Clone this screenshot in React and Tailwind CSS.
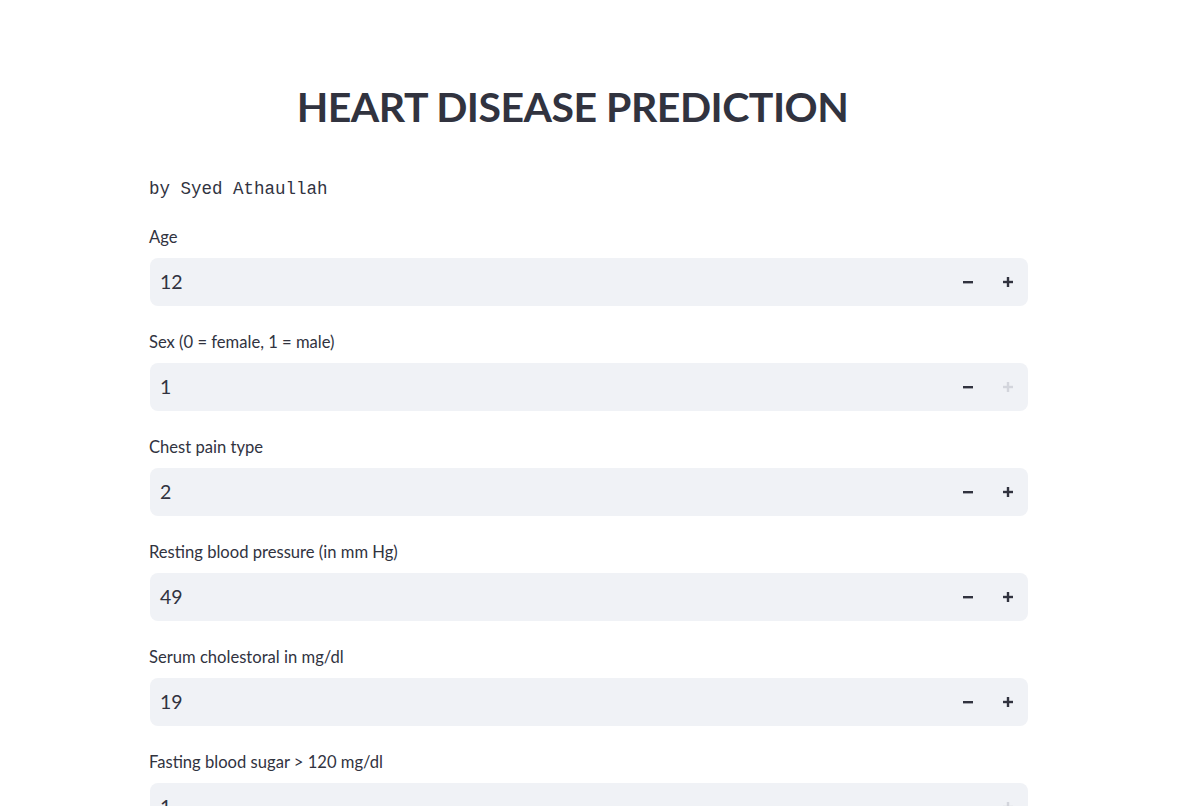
const fields = [
  { label: 'Age', value: '12' },
  { label: 'Sex (0 = female, 1 = male)', value: '1', plusDisabled: true },
  { label: 'Chest pain type', value: '2' },
  { label: 'Resting blood pressure (in mm Hg)', value: '49' },
  { label: 'Serum cholestoral in mg/dl', value: '19' },
  { label: 'Fasting blood sugar > 120 mg/dl', value: '1', minusDisabled: true, plusDisabled: true },
];

function MinusIcon({ disabled }) {
  return (
    <svg width="12" height="12" viewBox="0 0 12 12">
      <rect x="1" y="5" width="10" height="2.4" fill={disabled ? '#d3d5dc' : '#31333f'} />
    </svg>
  );
}

function PlusIcon({ disabled }) {
  const c = disabled ? '#d3d5dc' : '#31333f';
  return (
    <svg width="12" height="12" viewBox="0 0 12 12">
      <rect x="1" y="4.8" width="10" height="2.4" fill={c} />
      <rect x="4.8" y="1" width="2.4" height="10" fill={c} />
    </svg>
  );
}

function NumberField({ label, value, minusDisabled, plusDisabled }) {
  return (
    <div className="flex flex-col">
      <label className="h-[22px] leading-[22px] text-[16.6px] text-[#31333f] mb-[10px]">{label}</label>
      <div className="h-[48px] flex items-center bg-[#f0f2f6] rounded-[8px] ml-px">
        <span className="flex-1 pl-[10px] text-[19.5px] text-[#31333f]">{value}</span>
        <button className="w-[40px] h-full flex items-center justify-center">
          <MinusIcon disabled={minusDisabled} />
        </button>
        <button className="w-[40px] h-full flex items-center justify-center">
          <PlusIcon disabled={plusDisabled} />
        </button>
      </div>
    </div>
  );
}

export default function App() {
  return (
    <div className="min-h-[806px] bg-white overflow-hidden" style={{ fontFamily: 'Lato, "Noto Sans", sans-serif' }}>
      <div className="w-[879px] ml-[149px] pt-[80px]">
        <h1 className="text-center pr-[32px] text-[41px] leading-[54px] font-bold text-[#31333f] tracking-[-0.5px]">
          HEART DISEASE PREDICTION
        </h1>
        <p
          className="mt-[43px] text-[17.5px] leading-[24px] text-[#31333f]"
          style={{ fontFamily: '"Liberation Mono", monospace' }}
        >
          by Syed Athaullah
        </p>
        <div className="mt-[25px] flex flex-col gap-[25px]">
          {fields.map((f) => (
            <NumberField key={f.label} {...f} />
          ))}
        </div>
      </div>
    </div>
  );
}
